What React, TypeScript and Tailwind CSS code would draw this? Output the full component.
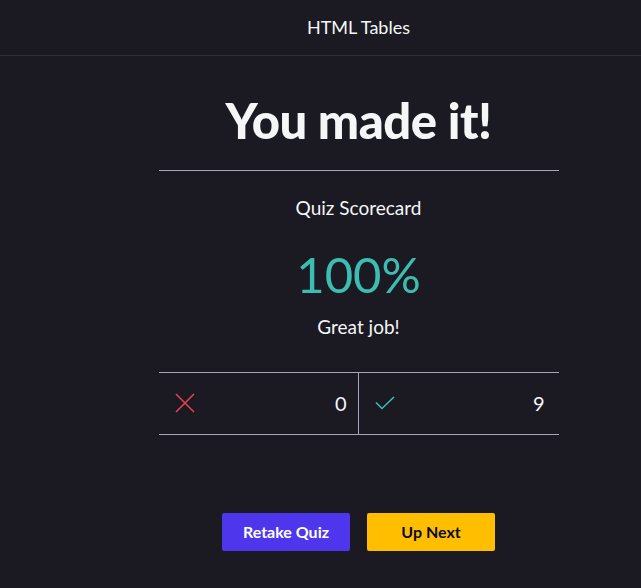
export default function App() {
  return (
    <div className="min-h-[588px] bg-[#1b1a23] text-[#f5f6f7] font-['Lato','Noto_Sans',sans-serif]">
      <header className="h-[56px] border-b border-[#2e2d3a] flex items-center justify-center pl-[76px]">
        <span className="text-[18px]">HTML Tables</span>
      </header>
      <main className="pl-[76px] flex flex-col items-center">
        <div className="w-[400px] flex flex-col items-center">
          <h1 className="mt-[33px] text-[49px] font-black leading-[1.3] tracking-[-0.5px]">You made it!</h1>
          <hr className="w-full mt-[17px] border-0 border-t border-[#a6a4bd]" />
          <p className="mt-[25px] text-[19px] leading-[24px]">Quiz Scorecard</p>
          <p className="mt-[26px] text-[49px] leading-[56px] text-[#3cbdb1]">100%</p>
          <p className="mt-[13px] text-[19px] leading-[24px]">Great job!</p>
          <div className="mt-[33px] w-full grid grid-cols-2 border-y border-[#a6a4bd] h-[63px]">
            <div className="flex items-center justify-between pl-[16px] pr-[11px] border-r border-[#a6a4bd]">
              <svg width="20" height="20" viewBox="0 0 20 20" fill="none" stroke="#e3414c" strokeWidth="1.6">
                <path d="M1 1 L19 19 M19 1 L1 19" />
              </svg>
              <span className="text-[20px]">0</span>
            </div>
            <div className="flex items-center justify-between pl-[16px] pr-[14px]">
              <svg width="20" height="14" viewBox="0 0 20 14" fill="none" stroke="#3cbdb1" strokeWidth="1.6">
                <path d="M1 6.5 L7 12.5 L19 1" />
              </svg>
              <span className="text-[20px]">9</span>
            </div>
          </div>
          <div className="mt-[78px] flex gap-[17px]">
            <button className="w-[128px] h-[38px] rounded-[2px] bg-[#4d36ec] text-white font-bold text-[16px]">Retake Quiz</button>
            <button className="w-[128px] h-[38px] rounded-[2px] bg-[#ffbf00] text-[#0a0a23] font-bold text-[16px]">Up Next</button>
          </div>
        </div>
      </main>
    </div>
  );
}
